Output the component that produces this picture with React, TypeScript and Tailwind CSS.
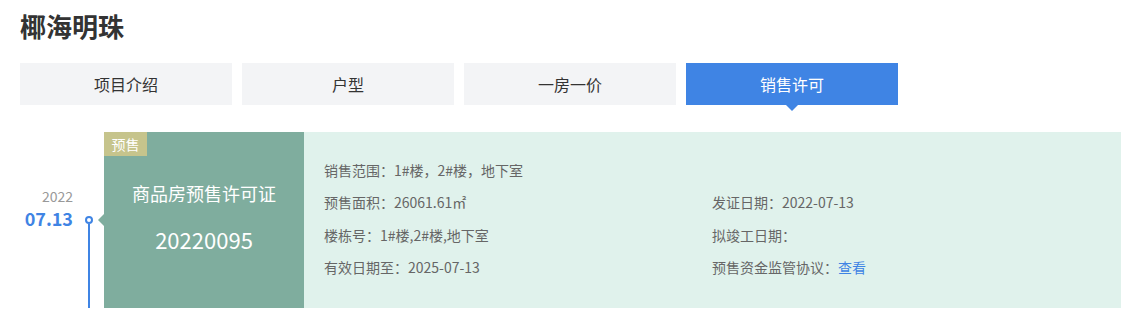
const tabs = ['项目介绍', '户型', '一房一价', '销售许可'];

const Tab = ({ label, active }: { label: string; active?: boolean }) => (
  <div
    className={`relative flex h-[42px] w-[212px] items-center justify-center text-[16px] ${
      active ? 'bg-[#3f84e4] text-white' : 'bg-[#f3f4f6] text-[#333]'
    }`}
  >
    {label}
    {active && (
      <span className="absolute left-1/2 top-full -ml-[6px] h-0 w-0 border-x-[6px] border-t-[6px] border-x-transparent border-t-[#3f84e4]" />
    )}
  </div>
);

export default function App() {
  return (
    <div
      className="h-[314px] w-[1121px] bg-white pl-[20px] pt-[8px]"
      style={{ fontFamily: '"Noto Sans CJK SC", "Noto Sans", sans-serif' }}
    >
      <h1 className="text-[26px] font-bold leading-[36px] text-[#333]">椰海明珠</h1>

      <div className="mt-[19px] flex gap-[10px]">
        {tabs.map((t) => (
          <Tab key={t} label={t} active={t === '销售许可'} />
        ))}
      </div>

      <div className="mt-[27px] flex h-[176px]">
        {/* timeline */}
        <div className="flex w-[84px]">
          <div className="w-[53px] pt-[54px] text-right">
            <div className="text-[14px] leading-[20px] text-[#999]">2022</div>
            <div className="text-[18px] font-bold leading-[24px] text-[#3f84e4]">07.13</div>
          </div>
          <div className="ml-[11px] flex w-[9px] flex-col items-center pt-[84px]">
            <div className="h-[8px] w-[8px] rounded-full border-2 border-[#3f84e4] bg-white" />
            <div className="w-[2px] flex-1 bg-[#3f84e4]" />
          </div>
        </div>

        {/* card */}
        <div className="relative flex w-[200px] flex-col items-center bg-[#7fad9e] text-white">
          <span className="absolute -left-[6px] top-[82px] h-0 w-0 border-y-[6px] border-r-[6px] border-y-transparent border-r-[#7fad9e]" />
          <span className="absolute left-0 top-0 flex h-[24px] w-[43px] items-center justify-center bg-[#c6c48c] text-[14px]">
            预售
          </span>
          <div className="mt-[48px] text-[18px] leading-[26px]">商品房预售许可证</div>
          <div className="mt-[18px] text-[22px] leading-[30px]">20220095</div>
        </div>

        {/* info */}
        <div className="flex-1 bg-[#e0f2ec] pl-[20px] pt-[22px] text-[14px] text-[#666]">
          <div className="grid grid-cols-[388px_1fr] auto-rows-[32.5px] items-center">
            <div>销售范围：1#楼，2#楼，地下室</div>
            <div />
            <div>预售面积：26061.61㎡</div>
            <div>发证日期：2022-07-13</div>
            <div>楼栋号：1#楼,2#楼,地下室</div>
            <div>拟竣工日期：</div>
            <div>有效日期至：2025-07-13</div>
            <div>
              预售资金监管协议：<span className="text-[#3f84e4]">查看</span>
            </div>
          </div>
        </div>
      </div>
    </div>
  );
}
